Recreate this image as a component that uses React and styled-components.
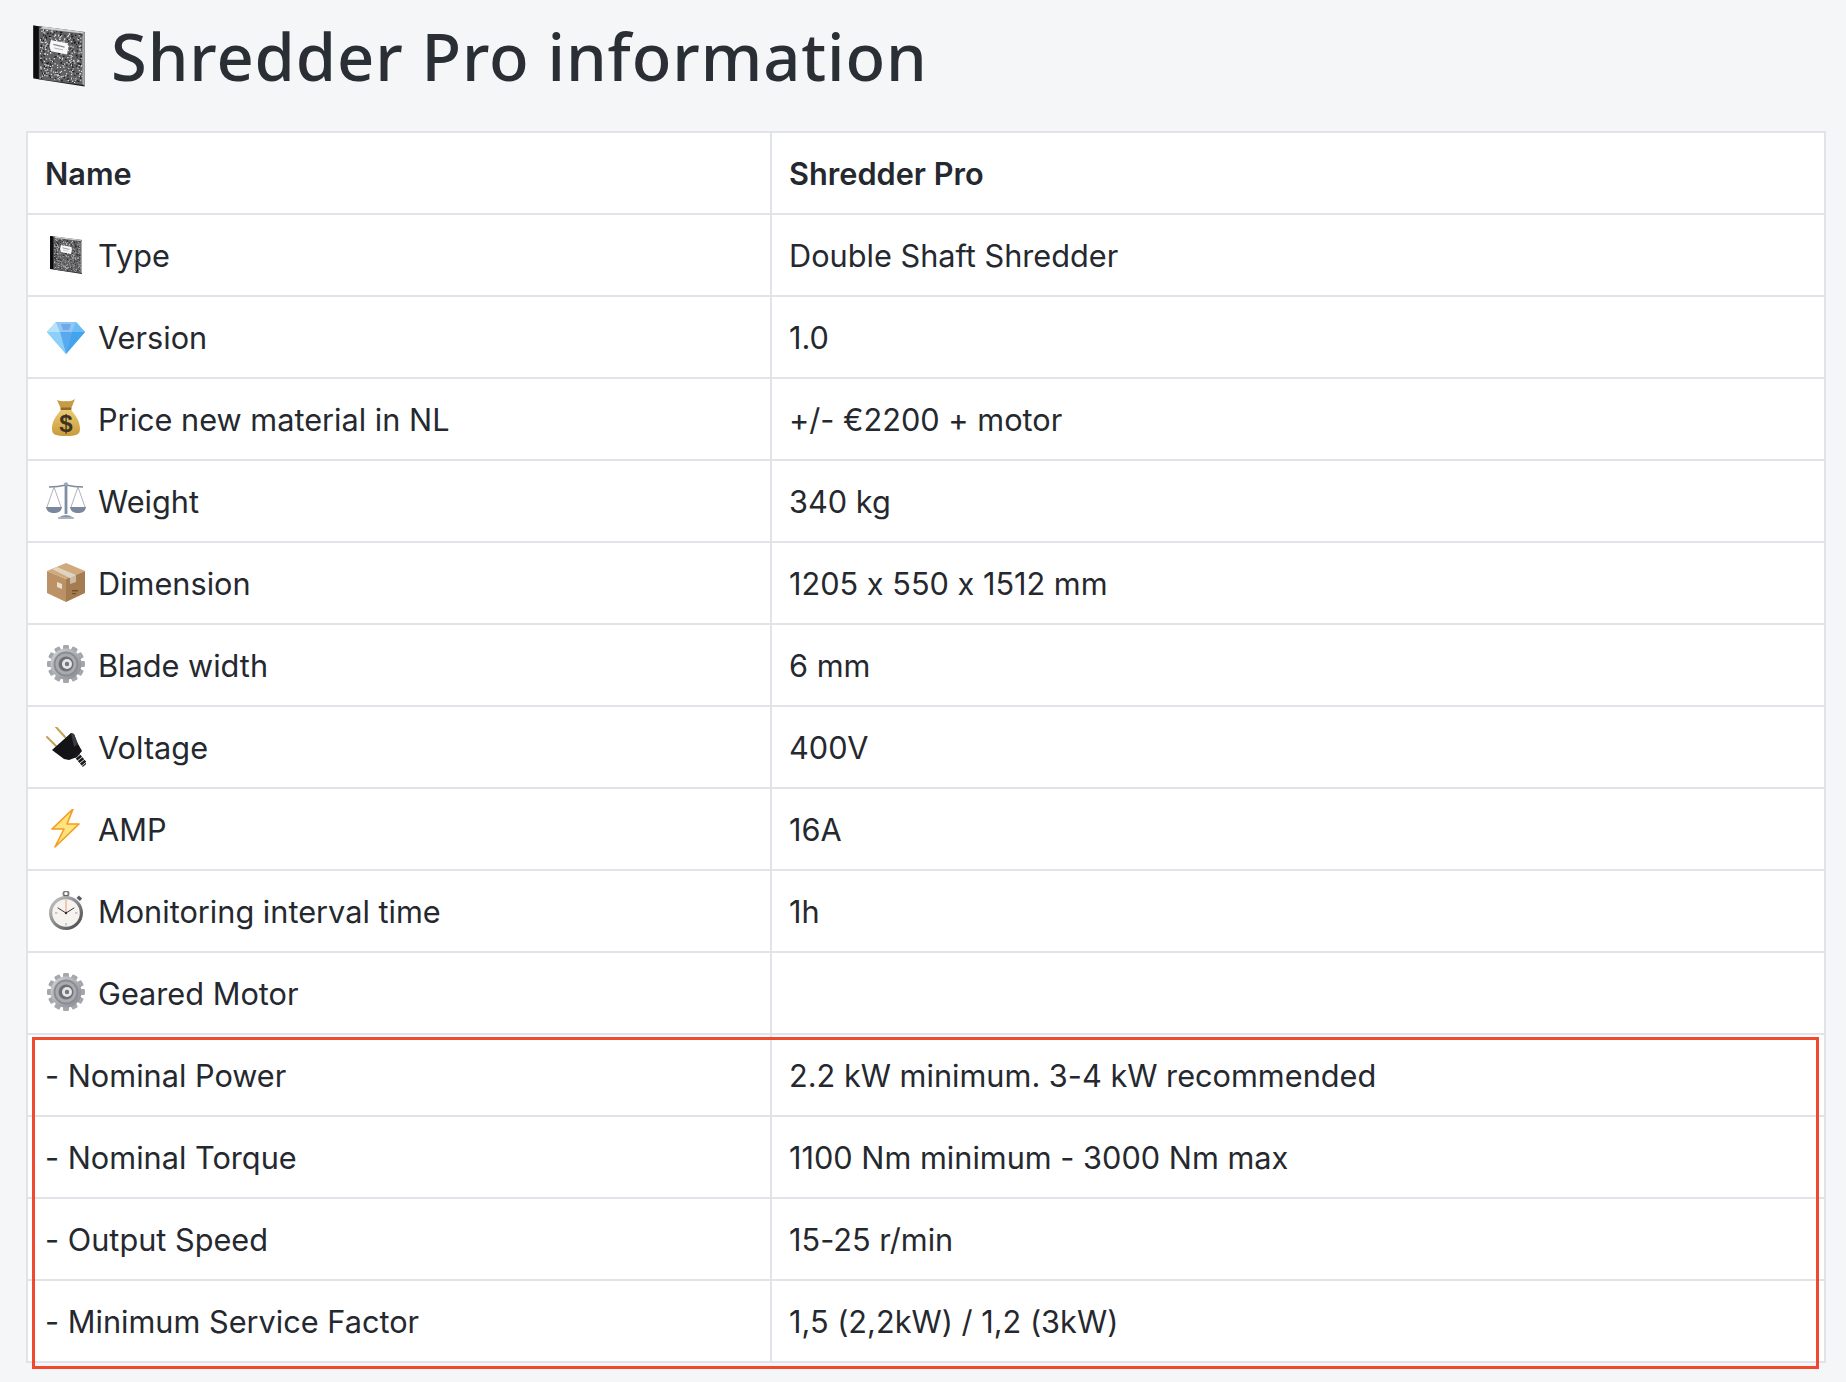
import React from 'react'
import styled, { createGlobalStyle } from 'styled-components'

const Global = createGlobalStyle`
  html, body { margin: 0; padding: 0; background: #f5f6f8; }
  body {
    font-family: Inter, "Liberation Sans", sans-serif;
    font-feature-settings: "calt" 0;
    color: #25292f;
  }
`

// deterministic speckle for the composition book cover
const specks = (() => {
  let seed = 7
  const next = () => {
    seed = (seed * 9301 + 49297) % 233280
    return seed / 233280
  }
  return Array.from({ length: 420 }, () => {
    const x = 8 + next() * 26
    const t = next()
    return { x, y: 3 + (x - 8) * 0.12 + t * 31, light: next() > 0.4 }
  })
})()

const Notebook = ({ size = 40 }) => (
  <svg width={size} height={size} viewBox="0 0 40 40">
    <polygon points="4,1 36,5 36,39 4,34" fill="#1d1d1f" />
    <polygon points="7.5,2 34.5,5.5 34.5,38 7.5,34.5" fill="#616163" />
    <polygon points="4,1 7,1.5 7,34 4,33.5" fill="#0d0d0e" />
    <polygon points="10,1.6 36,5 34.5,6 8,2.8" fill="#cfcfd1" />
    <polygon points="34.5,5.5 36,5.4 36,38.6 34.5,37.6" fill="#a9a9ab" />
    {specks.map((s, i) => (
      <rect key={i} x={s.x} y={s.y} width="0.75" height="0.75" fill={s.light ? '#e2e2e4' : '#161618'} />
    ))}
    <polygon points="15,10 25,12 26,14 25,19 15,17 14,14" fill="#f8f8f8" />
    <line x1="16.5" y1="12.8" x2="23.5" y2="14.4" stroke="#8a8a8a" strokeWidth="0.8" />
    <line x1="17" y1="15" x2="22.5" y2="16.2" stroke="#b0b0b0" strokeWidth="0.6" />
  </svg>
)

const Gem = () => (
  <svg width="40" height="40" viewBox="0 0 40 40">
    <polygon points="10,5 30,5 39,15 20,37 1,15" fill="#6cb8f2" />
    <polygon points="10,5 30,5 26,15 14,15" fill="#8fc6f3" />
    <polygon points="14,15 26,15 20,37" fill="#5aa9ef" />
    <polygon points="1,15 14,15 20,37" fill="#8bd0fa" />
    <polygon points="26,15 39,15 20,37" fill="#43a3ee" />
    <polygon points="10,5 14,15 1,15" fill="#b4e2fb" />
    <polygon points="30,5 26,15 39,15" fill="#6dbdf5" />
    <polygon points="15,7 25,7 23,13 17,13" fill="#6fa9e8" />
  </svg>
)

const MoneyBag = () => (
  <svg width="40" height="40" viewBox="0 0 40 40">
    <defs>
      <linearGradient id="bag" x1="0" y1="0" x2="0" y2="1">
        <stop offset="0" stopColor="#eccb75" />
        <stop offset="1" stopColor="#c99a3c" />
      </linearGradient>
    </defs>
    <path d="M11 1 Q16 3 20 2 Q25 3 29 0 L25 10 L15 10 Z" fill="#c79a45" />
    <path d="M15 10 H25 C28 16 34 20 34 30 C34 36 30 37 20 37 C10 37 6 36 6 30 C6 20 12 16 15 10 Z" fill="url(#bag)" />
    <rect x="14.5" y="8.5" width="11" height="2.5" rx="1.2" fill="#8f6a28" />
    <text x="20" y="33" textAnchor="middle" fontFamily="Liberation Sans" fontSize="24" fontWeight="700" fill="#3d3320">$</text>
  </svg>
)

const Scales = () => (
  <svg width="40" height="40" viewBox="0 0 40 40" fill="none">
    <path d="M3 6 Q12 6 20 4 Q28 6 37 6" stroke="#7d8a9c" strokeWidth="1.4" />
    <rect x="18.6" y="2" width="2.8" height="31" fill="#7f8ea3" />
    <circle cx="20" cy="3" r="1.8" fill="#9aa7b8" />
    <path d="M12 37 Q20 31 28 37 Z" fill="#8595a9" />
    <rect x="12" y="36" width="16" height="2" rx="1" fill="#a8b3c1" />
    <path d="M8 6 L1 26 M8 6 L15 26 M32 6 L25 26 M32 6 L39 26" stroke="#98a0ab" strokeWidth="0.8" />
    <path d="M0 26 H16 C15 31 12 32 8 32 C4 32 1 31 0 26 Z" fill="#79889b" />
    <path d="M24 26 H40 C39 31 36 32 32 32 C28 32 25 31 24 26 Z" fill="#79889b" />
  </svg>
)

const Box = () => (
  <svg width="40" height="40" viewBox="0 0 40 40">
    <polygon points="20,0 39,8 20,16 1,8" fill="#d0a97c" />
    <polygon points="1,8 20,16 20,39 1,30" fill="#bb9166" />
    <polygon points="39,8 20,16 20,39 39,30" fill="#a47c4f" />
    <polygon points="11,4 30,12 30,18 24,15 6,6" fill="#dfd3c1" />
    <polygon points="24,15 30,12 30,19 24,21" fill="#c9bba6" />
    <polygon points="11,19 16,21 16,26 11,24" fill="#e9dfcf" />
    <rect x="26" y="27" width="6" height="1.4" fill="#6e4f2d" />
    <rect x="26" y="30" width="4" height="1.2" fill="#6e4f2d" />
  </svg>
)

const Gear = () => {
  const teeth = Array.from({ length: 12 }, (_, i) => i * 30)
  return (
    <svg width="40" height="40" viewBox="0 0 40 40">
      <defs>
        <linearGradient id="gearBody" x1="0" y1="0" x2="1" y2="1">
          <stop offset="0" stopColor="#d2d4d8" />
          <stop offset="1" stopColor="#85888e" />
        </linearGradient>
      </defs>
      {teeth.map((a) => (
        <rect key={a} x="17" y="0" width="6" height="8" rx="1.2" fill="#a4a7ac" transform={`rotate(${a} 20 19)`} />
      ))}
      <circle cx="20" cy="19" r="15.5" fill="url(#gearBody)" />
      <circle cx="20" cy="19" r="12.5" fill="#8b8d93" />
      <circle cx="20" cy="19" r="10.5" fill="#a9abb0" />
      <circle cx="20" cy="19" r="7.5" fill="#6e7076" />
      <circle cx="21" cy="19" r="5" fill="#e6e6e8" />
      <circle cx="21" cy="19" r="2.2" fill="#75777d" />
    </svg>
  )
}

const Plug = () => (
  <svg width="40" height="40" viewBox="0 0 40 40">
    <path d="M10 0 L19 10 M1 10 L11 20" stroke="#c3a253" strokeWidth="2" strokeLinecap="round" />
    <path d="M6 23 L25 6 L28 7 L31 15 L36 24 L31 30 L23 33 L18 32 Z" fill="#141416" />
    <polygon points="25,6 28,7 32,17 28,20" fill="#3b3b40" />
    <path d="M30 27 L39 38" stroke="#1a1a1d" strokeWidth="6" strokeDasharray="2.6 0.7" />
  </svg>
)

const Bolt = () => (
  <svg width="40" height="40" viewBox="0 0 40 40">
    <path d="M27 0 L6 20 L18 20 L9 38 L33 15 L21 15 Z" fill="#ffe47e" stroke="#f39c1f" strokeWidth="1.6" strokeLinejoin="round" />
  </svg>
)

const Stopwatch = () => (
  <svg width="40" height="40" viewBox="0 0 40 40">
    <defs>
      <linearGradient id="rim" x1="0" y1="0" x2="1" y2="1">
        <stop offset="0" stopColor="#cfcfd1" />
        <stop offset="1" stopColor="#3f4145" />
      </linearGradient>
    </defs>
    <circle cx="20" cy="2.6" r="2.6" fill="none" stroke="#7c7e82" strokeWidth="1.8" />
    <rect x="18" y="4" width="4" height="3.4" fill="#64666a" />
    <rect x="30.5" y="5.5" width="4.5" height="3.4" fill="#5a5c60" transform="rotate(42 33 8)" />
    <circle cx="20" cy="22" r="17" fill="url(#rim)" />
    <circle cx="20" cy="22" r="13.8" fill="#f6f2ed" />
    <path d="M20 22 L20 9" stroke="#e2936f" strokeWidth="0.9" />
    <path d="M20 22 L12 17 M20 22 L28 17" stroke="#3a3a3c" strokeWidth="1" strokeLinecap="round" />
    <circle cx="20" cy="22" r="1.2" fill="#2f2f31" />
    <g fill="#9b9b9d">
      <rect x="19.5" y="32" width="1" height="2.4" />
      <rect x="9" y="21.5" width="2.4" height="1" />
      <rect x="29" y="21.5" width="2.4" height="1" />
    </g>
  </svg>
)

const Page = styled.main`
  width: 1846px;
  height: 1382px;
  box-sizing: border-box;
  padding: 0 20px 0 26px;
  overflow: hidden;
`
const Heading = styled.h1`
  display: flex;
  align-items: center;
  gap: 21px;
  height: 131px;
  margin: 0;
  padding-bottom: 20px;
  box-sizing: border-box;
  font-family: "Noto Sans", sans-serif;
  font-size: 65px;
  font-weight: 500;
  letter-spacing: 0.9px;
  color: #2a2e35;

  svg {
    margin-left: 1px;
    margin-right: -1px;
  }
`
const TableWrap = styled.div`
  position: relative;
`
const Table = styled.table`
  width: 100%;
  table-layout: fixed;
  border-collapse: collapse;
  background: #fff;
  font-size: 30.7px;
`
const Cell = styled.td`
  height: 82px;
  padding: 2px 0 0 17px;
  border: 2px solid #e2e3e8;
  font-weight: 400;
  line-height: 1;
  box-sizing: border-box;
  width: ${(p) => p.$width || 'auto'};
`
const HeadCell = styled(Cell).attrs({ as: 'th' })`
  font-weight: 600;
  text-align: left;
`
const Label = styled.span`
  display: flex;
  align-items: center;
  gap: 12px;

  svg {
    flex: none;
    margin: -2px 0 0 1px;
  }
`
const Highlight = styled.div`
  position: absolute;
  left: 6px;
  right: 7px;
  bottom: -6px;
  height: 332px;
  box-sizing: border-box;
  border: 3px solid #f0492e;
  pointer-events: none;
`

const rows = [
  [Notebook, 'Type', 'Double Shaft Shredder'],
  [Gem, 'Version', '1.0'],
  [MoneyBag, 'Price new material in NL', '+/- €2200 + motor'],
  [Scales, 'Weight', '340 kg'],
  [Box, 'Dimension', '1205 x 550 x 1512 mm'],
  [Gear, 'Blade width', '6 mm'],
  [Plug, 'Voltage', '400V'],
  [Bolt, 'AMP', '16A'],
  [Stopwatch, 'Monitoring interval time', '1h'],
  [Gear, 'Geared Motor', ''],
  [null, '- Nominal Power', '2.2 kW minimum. 3-4 kW recommended'],
  [null, '- Nominal Torque', '1100 Nm minimum - 3000 Nm max'],
  [null, '- Output Speed', '15-25 r/min'],
  [null, '- Minimum Service Factor', '1,5 (2,2kW) / 1,2 (3kW)'],
]

export default function App() {
  return (
    <Page>
      <Global />
      <Heading>
        <Notebook size={64} />
        Shredder Pro information
      </Heading>
      <TableWrap>
        <Table>
          <thead>
            <tr>
              <HeadCell $width="744px">Name</HeadCell>
              <HeadCell>Shredder Pro</HeadCell>
            </tr>
          </thead>
          <tbody>
            {rows.map(([Icon, name, value]) => (
              <tr key={name}>
                <Cell>
                  <Label>
                    {Icon && <Icon />}
                    {name}
                  </Label>
                </Cell>
                <Cell>{value}</Cell>
              </tr>
            ))}
          </tbody>
        </Table>
        <Highlight />
      </TableWrap>
    </Page>
  )
}
